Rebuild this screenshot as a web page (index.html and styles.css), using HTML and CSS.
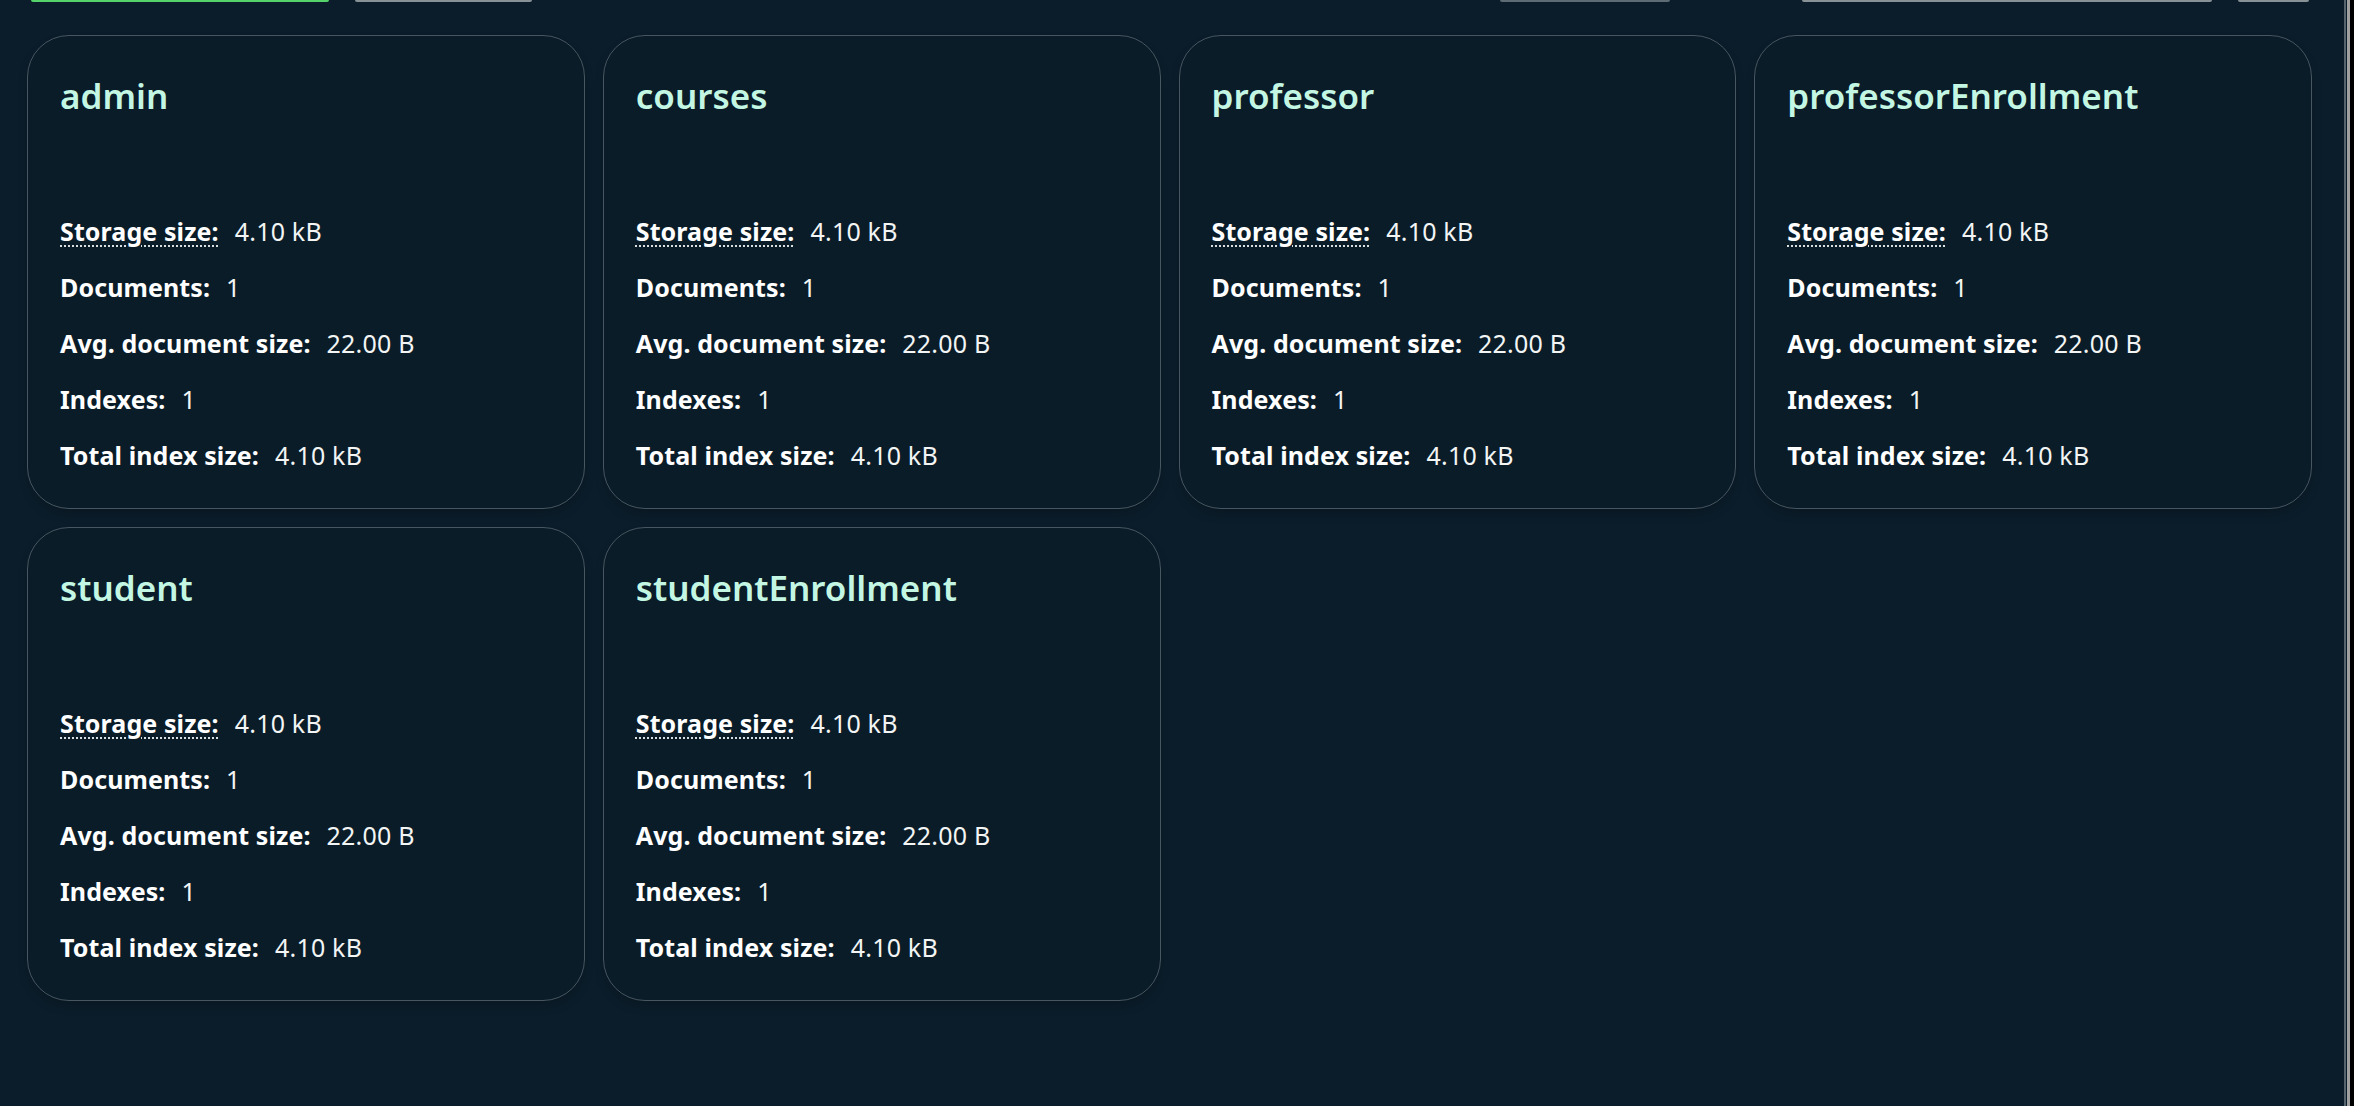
FILE: index.html
```html
<!DOCTYPE html>
<html lang="en">
<head>
<meta charset="utf-8">
<title>Collections</title>
<link rel="stylesheet" href="styles.css">
</head>
<body>
<div class="window">
  <main class="main">
    <div class="toolbar">
      <span class="tb tb-green"></span>
      <span class="tb tb-grey"></span>
      <span class="spacer"></span>
      <span class="tb tb-sort"></span>
      <span class="tb tb-search"></span>
      <span class="tb tb-view"></span>
    </div>
    <section class="grid">
      <article class="card">
        <h2 class="title">admin</h2>
        <dl class="stats">
          <div class="row"><dt class="label dotted">Storage size:</dt><dd class="value">4.10 kB</dd></div>
          <div class="row"><dt class="label">Documents:</dt><dd class="value">1</dd></div>
          <div class="row"><dt class="label">Avg. document size:</dt><dd class="value">22.00 B</dd></div>
          <div class="row"><dt class="label">Indexes:</dt><dd class="value">1</dd></div>
          <div class="row"><dt class="label">Total index size:</dt><dd class="value">4.10 kB</dd></div>
        </dl>
      </article>
      <article class="card">
        <h2 class="title">courses</h2>
        <dl class="stats">
          <div class="row"><dt class="label dotted">Storage size:</dt><dd class="value">4.10 kB</dd></div>
          <div class="row"><dt class="label">Documents:</dt><dd class="value">1</dd></div>
          <div class="row"><dt class="label">Avg. document size:</dt><dd class="value">22.00 B</dd></div>
          <div class="row"><dt class="label">Indexes:</dt><dd class="value">1</dd></div>
          <div class="row"><dt class="label">Total index size:</dt><dd class="value">4.10 kB</dd></div>
        </dl>
      </article>
      <article class="card">
        <h2 class="title">professor</h2>
        <dl class="stats">
          <div class="row"><dt class="label dotted">Storage size:</dt><dd class="value">4.10 kB</dd></div>
          <div class="row"><dt class="label">Documents:</dt><dd class="value">1</dd></div>
          <div class="row"><dt class="label">Avg. document size:</dt><dd class="value">22.00 B</dd></div>
          <div class="row"><dt class="label">Indexes:</dt><dd class="value">1</dd></div>
          <div class="row"><dt class="label">Total index size:</dt><dd class="value">4.10 kB</dd></div>
        </dl>
      </article>
      <article class="card">
        <h2 class="title">professorEnrollment</h2>
        <dl class="stats">
          <div class="row"><dt class="label dotted">Storage size:</dt><dd class="value">4.10 kB</dd></div>
          <div class="row"><dt class="label">Documents:</dt><dd class="value">1</dd></div>
          <div class="row"><dt class="label">Avg. document size:</dt><dd class="value">22.00 B</dd></div>
          <div class="row"><dt class="label">Indexes:</dt><dd class="value">1</dd></div>
          <div class="row"><dt class="label">Total index size:</dt><dd class="value">4.10 kB</dd></div>
        </dl>
      </article>
      <article class="card">
        <h2 class="title">student</h2>
        <dl class="stats">
          <div class="row"><dt class="label dotted">Storage size:</dt><dd class="value">4.10 kB</dd></div>
          <div class="row"><dt class="label">Documents:</dt><dd class="value">1</dd></div>
          <div class="row"><dt class="label">Avg. document size:</dt><dd class="value">22.00 B</dd></div>
          <div class="row"><dt class="label">Indexes:</dt><dd class="value">1</dd></div>
          <div class="row"><dt class="label">Total index size:</dt><dd class="value">4.10 kB</dd></div>
        </dl>
      </article>
      <article class="card">
        <h2 class="title">studentEnrollment</h2>
        <dl class="stats">
          <div class="row"><dt class="label dotted">Storage size:</dt><dd class="value">4.10 kB</dd></div>
          <div class="row"><dt class="label">Documents:</dt><dd class="value">1</dd></div>
          <div class="row"><dt class="label">Avg. document size:</dt><dd class="value">22.00 B</dd></div>
          <div class="row"><dt class="label">Indexes:</dt><dd class="value">1</dd></div>
          <div class="row"><dt class="label">Total index size:</dt><dd class="value">4.10 kB</dd></div>
        </dl>
      </article>
    </section>
  </main>
  <div class="edge"></div>
</div>
</body>
</html>
```

FILE: styles.css
```css
* { box-sizing: border-box; }

html, body {
  margin: 0;
  padding: 0;
  height: 100%;
  background: #0b1d2a;
}

body {
  font-family: "Noto Sans", Lato, sans-serif;
  color: #ffffff;
  overflow: hidden;
}

.window {
  display: flex;
  height: 100vh;
}

.main {
  flex: 1;
  padding: 0 32px 0 27px;
  background: #0b1d2a;
}

.toolbar {
  display: flex;
  height: 2px;
  margin-bottom: 33px;
}

.tb {
  display: block;
  height: 2px;
  border-radius: 0 0 3px 3px;
}

.tb-green { margin-left: 4px; width: 298px; background: #54d36a; }
.tb-grey { margin-left: 26px; width: 177px; background: #889196; }
.spacer { flex: 1; }
.tb-sort { width: 170px; background: #5c6b74; }
.tb-search { margin-left: 132px; width: 410px; background: #889196; }
.tb-view { margin-left: 26px; width: 71px; background: #889196; margin-right: 3px; }

.grid {
  display: grid;
  grid-template-columns: repeat(4, 1fr);
  gap: 18px;
}

.card {
  border: 1px solid #475660;
  border-radius: 42px;
  padding: 37px 32px 37px 32px;
  background: #0a1c28;
  box-shadow: 0 6px 14px -6px rgba(0, 0, 0, 0.35);
}

.title {
  margin: 0;
  font-size: 35px;
  line-height: 46px;
  font-weight: 600;
  color: #c3f7e3;
}

.stats {
  margin: 96px 0 0 0;
  display: flex;
  flex-direction: column;
  gap: 24px;
}

.row {
  display: flex;
  align-items: baseline;
  gap: 16px;
  font-size: 25px;
  line-height: 32px;
}

.label {
  font-weight: 700;
  color: #ffffff;
  letter-spacing: 0.1px;
}

.dotted {
  text-decoration: underline dotted #d8dde0;
  text-decoration-thickness: 2px;
  text-underline-offset: 4px;
}

.value {
  margin: 0;
  font-weight: 400;
  color: #f2f5f4;
  letter-spacing: 0.2px;
}

.edge {
  width: 10px;
  background: linear-gradient(to right,
    #56646d 0, #56646d 2px,
    #0b1d2a 2px, #0b1d2a 3px,
    #a0a0a0 3px, #a0a0a0 6px,
    #000000 6px, #000000 10px);
}
```
